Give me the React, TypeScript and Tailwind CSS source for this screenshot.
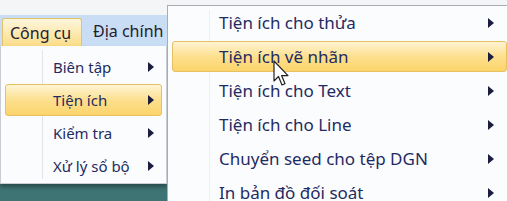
import type { ReactNode } from "react";

const font = { fontFamily: '"Noto Sans", "Open Sans", sans-serif' };

const leftItems = ["Biên tập", "Tiện ích", "Kiểm tra", "Xử lý sổ bộ"];
const rightItems = [
  "Tiện ích cho thửa",
  "Tiện ích vẽ nhãn",
  "Tiện ích cho Text",
  "Tiện ích cho Line",
  "Chuyển seed cho tệp DGN",
  "In bản đồ đối soát",
];

const Arrow = () => (
  <svg width="6" height="10" viewBox="0 0 6 10" className="shrink-0">
    <path d="M0 0 L6 5 L0 10 Z" fill="#1b1d3f" />
  </svg>
);

const Cursor = () => (
  <svg width="17" height="28" viewBox="0 0 17 28">
    <path
      d="M1 1 L1 21 L5.5 16.5 L9 25 L12 23.8 L8.6 15.6 L15 15.6 Z"
      fill="#ffffff"
      stroke="#222"
      strokeWidth="1.2"
      strokeLinejoin="round"
    />
  </svg>
);

// One row of a dropdown; the active row gets the yellow hover box.
const MenuRow = ({
  active,
  className,
  children,
}: {
  active?: boolean;
  className: string;
  children: ReactNode;
}) => (
  <div
    className={`flex items-center rounded-[3px] border ${
      active
        ? "border-[#e6c062] bg-gradient-to-b from-[#fff4d2] via-[#fde08e] to-[#fbd46a]"
        : "border-transparent"
    } ${className}`}
  >
    {children}
  </div>
);

export default function App() {
  return (
    <div
      className="relative h-[201px] w-[507px] overflow-hidden bg-[#3f7474] text-[#1f2b63]"
      style={font}
    >
      {/* window chrome above the menu bar */}
      <div className="h-[15px] bg-[#f4f5f7]" />
      <div className="flex h-[31px] items-stretch bg-[#c9ddf4] text-[16px] text-[#1e2030]">
        <div className="ml-[2px] mt-[3px] flex w-[80px] items-center rounded-t-[3px] border border-b-0 border-[#e2c26c] bg-gradient-to-b from-[#fef6dc] to-[#fbdc86] pl-[7px]">
          Công cụ
        </div>
        <div className="flex items-center pl-[11px]">Địa chính</div>
      </div>

      {/* first dropdown */}
      <div className="absolute left-0 top-[46px] flex h-[138px] w-[167px] flex-col gap-[1px] border border-t-0 border-[#c9ccd3] bg-[#fbfcfd] pt-[5px] text-[15px] shadow-[0_3px_4px_rgba(0,0,0,0.35)]">
        <div className="absolute bottom-[4px] left-[41px] top-[4px] w-px bg-[#e3e5e9]" />
        {leftItems.map((label, i) => (
          <MenuRow
            key={label}
            active={i === 1}
            className="relative mx-[4px] h-[32px] shrink-0 pl-[47px] pr-[7px]"
          >
            <span className="flex-1">{label}</span>
            <Arrow />
          </MenuRow>
        ))}
      </div>

      {/* second dropdown */}
      <div className="absolute left-[167px] top-[5px] flex h-[210px] w-[345px] flex-col gap-[3px] border border-[#a9acb3] bg-[#fbfcfd] pt-px text-[17px]">
        <div className="absolute bottom-0 left-[41px] top-[4px] w-px bg-[#eceef1]" />
        {rightItems.map((label, i) => (
          <MenuRow
            key={label}
            active={i === 1}
            className="relative mx-[4px] h-[31px] shrink-0 pl-[46px] pr-[12px]"
          >
            <span className="flex-1">{label}</span>
            <Arrow />
          </MenuRow>
        ))}
      </div>

      <div className="absolute left-[273px] top-[60px]">
        <Cursor />
      </div>
    </div>
  );
}
